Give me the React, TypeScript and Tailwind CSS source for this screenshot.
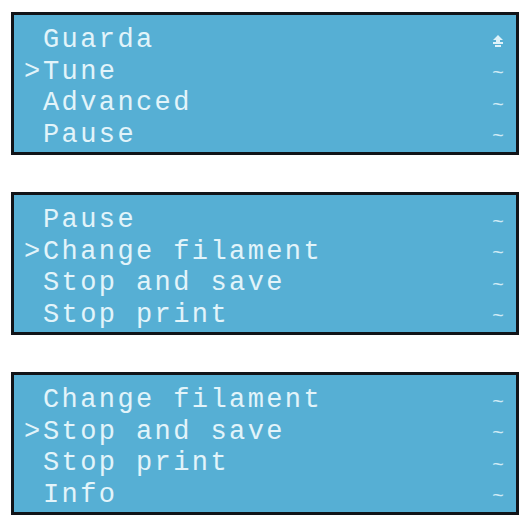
const PANELS = [
  { selected: 1, items: ['Guarda', 'Tune', 'Advanced', 'Pause'], top: true },
  { selected: 1, items: ['Pause', 'Change filament', 'Stop and save', 'Stop print'], top: false },
  { selected: 1, items: ['Change filament', 'Stop and save', 'Stop print', 'Info'], top: false },
]

function UpMark() {
  return (
    <svg width="12" height="14" viewBox="0 0 12 14">
      <path d="M6 1 L11 6 H8 V8 H11 V10 H1 V8 H4 V6 H1 Z" fill="#dff2f9" />
      <rect x="3" y="11" width="6" height="2" fill="#dff2f9" />
    </svg>
  )
}

function Panel({ items, selected, top }: { items: string[]; selected: number; top: boolean }) {
  return (
    <div className="h-[143px] border-[3px] border-[#111418] bg-[#56afd4] pt-[10px] pl-[10px] pr-[10px]">
      {items.map((label, i) => (
        <div key={i} className="flex h-[31.5px] items-center leading-[31px]">
          <span className="w-[19px] shrink-0">{i === selected ? '>' : ''}</span>
          <span className="flex-1 whitespace-pre tracking-[2.4px]">{label}</span>
          <span className="flex w-[16px] justify-center text-[20px] leading-[20px] text-[#cfeaf5]">
            {top && i === 0 ? <UpMark /> : <span className="mt-[4px]">~</span>}
          </span>
        </div>
      ))}
    </div>
  )
}

export default function App() {
  return (
    <div
      className="flex h-[520px] w-[523px] flex-col gap-[37px] bg-white pl-[11px] pr-[4px] pt-[12px] text-[27px] text-[#e2f4fa]"
      style={{ fontFamily: '"Liberation Mono", "DejaVu Sans Mono", monospace' }}
    >
      {PANELS.map((p, i) => (
        <Panel key={i} items={p.items} selected={p.selected} top={p.top} />
      ))}
    </div>
  )
}
